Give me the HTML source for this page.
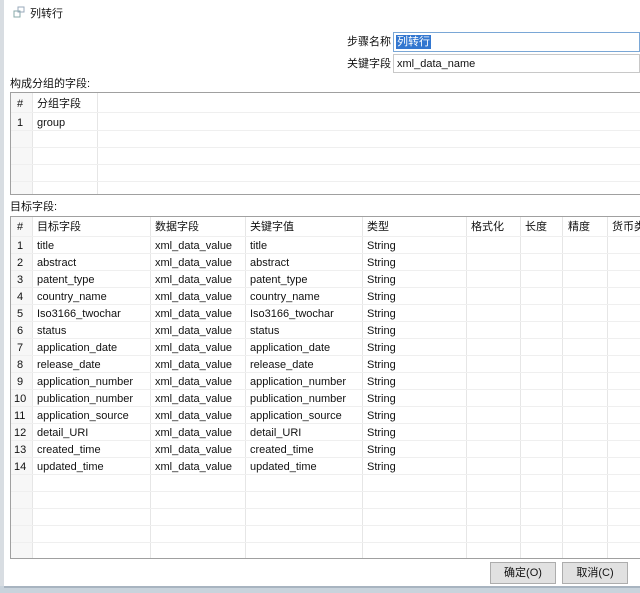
<!DOCTYPE html>
<html><head><meta charset="utf-8"><style>
*{margin:0;padding:0;box-sizing:border-box}
body{width:640px;height:593px;background:#fff;position:relative;overflow:hidden;font-family:"Liberation Sans","Noto Sans CJK SC",sans-serif;font-size:11px;color:#111}
.a{position:absolute;white-space:nowrap;line-height:14px}
.vl{position:absolute;width:1px;background:#e6e6e6}
.hl{position:absolute;height:1px;background:#efefef}
.btn{position:absolute;height:22px;border:1px solid #adadad;background:#e1e1e1;text-align:center;line-height:20px;font-size:11px}
</style></head><body>
<div class="a" style="left:0;top:0;width:4px;height:593px;background:#d8dde2"></div>
<div class="a" style="left:0;top:586px;width:640px;height:7px;background:#c9d3dc"></div>
<div class="a" style="left:4px;top:586px;width:636px;height:2px;background:#a8b4c0"></div>
<svg class="a" style="left:13px;top:6px" width="12" height="12"><rect x="1" y="5" width="6" height="6" fill="none" stroke="#8aa" /><rect x="5" y="1" width="6" height="5" fill="none" stroke="#9ab"/></svg>
<div class="a" style="left:30px;top:7px;font-size:11px">列转行</div>
<div class="a" style="left:347px;top:35px">步骤名称</div>
<div class="a" style="left:347px;top:57px">关键字段</div>
<div class="a" style="left:393px;top:32px;width:247px;height:20px;border:1px solid #7aa7d6;background:#fff"></div>
<div class="a" style="left:396px;top:35px;background:#3377d0;color:#fff;padding:0 1px;line-height:14px">列转行</div>
<div class="a" style="left:393px;top:54px;width:247px;height:19px;border:1px solid #c8c8c8"></div>
<div class="a" style="left:397px;top:57px">xml_data_name</div>
<div class="a" style="left:10px;top:77px">构成分组的字段:</div>
<div class="a" style="left:10px;top:92px;width:630px;height:103px;border:1px solid #a0a0a0;border-right:none"></div>
<div class="a" style="left:11px;top:93px;width:21px;height:101px;background:#f7f7f7"></div>
<div class="vl" style="left:32px;top:93px;height:101px"></div>
<div class="vl" style="left:97px;top:93px;height:101px"></div>
<div class="hl" style="left:11px;top:112px;width:629px"></div>
<div class="hl" style="left:11px;top:130px;width:629px"></div>
<div class="hl" style="left:11px;top:147px;width:629px"></div>
<div class="hl" style="left:11px;top:164px;width:629px"></div>
<div class="hl" style="left:11px;top:181px;width:629px"></div>
<div class="a" style="left:17px;top:97px">#</div>
<div class="a" style="left:37px;top:97px">分组字段</div>
<div class="a" style="left:17px;top:116px">1</div>
<div class="a" style="left:37px;top:116px">group</div>
<div class="a" style="left:10px;top:200px">目标字段:</div>
<div class="a" style="left:10px;top:216px;width:630px;height:343px;border:1px solid #a0a0a0;border-right:none"></div>
<div class="a" style="left:11px;top:217px;width:21px;height:341px;background:#f7f7f7"></div>
<div id="g"></div>
<div class="btn" style="left:490px;top:562px;width:66px">确定(O)</div>
<div class="btn" style="left:562px;top:562px;width:66px">取消(C)</div>
<script>
var g=document.getElementById('g'),h='';
[32,150,245,362,466,520,562,607].forEach(function(x){h+='<div class="vl" style="left:'+x+'px;top:217px;height:341px"></div>'});
for(var i=0;i<19;i++){h+='<div class="hl" style="left:11px;top:'+(236+i*17)+'px;width:629px"></div>'}
var H=['#','目标字段','数据字段','关键字值','类型','格式化','长度','精度','货币类型'],X=[17,37,155,250,367,471,525,568,612];
H.forEach(function(t,j){h+='<div class="a" style="left:'+X[j]+'px;top:220px">'+t+'</div>'});
var R=['title','abstract','patent_type','country_name','Iso3166_twochar','status','application_date','release_date','application_number','publication_number','application_source','detail_URI','created_time','updated_time'];
R.forEach(function(r,i){var y=239+i*17;
h+='<div class="a" style="left:'+(i<9?17:14)+'px;top:'+y+'px">'+(i+1)+'</div><div class="a" style="left:37px;top:'+y+'px">'+r+'</div><div class="a" style="left:155px;top:'+y+'px">xml_data_value</div><div class="a" style="left:250px;top:'+y+'px">'+r+'</div><div class="a" style="left:367px;top:'+y+'px">String</div>'});
g.innerHTML=h;
</script>
</body></html>
